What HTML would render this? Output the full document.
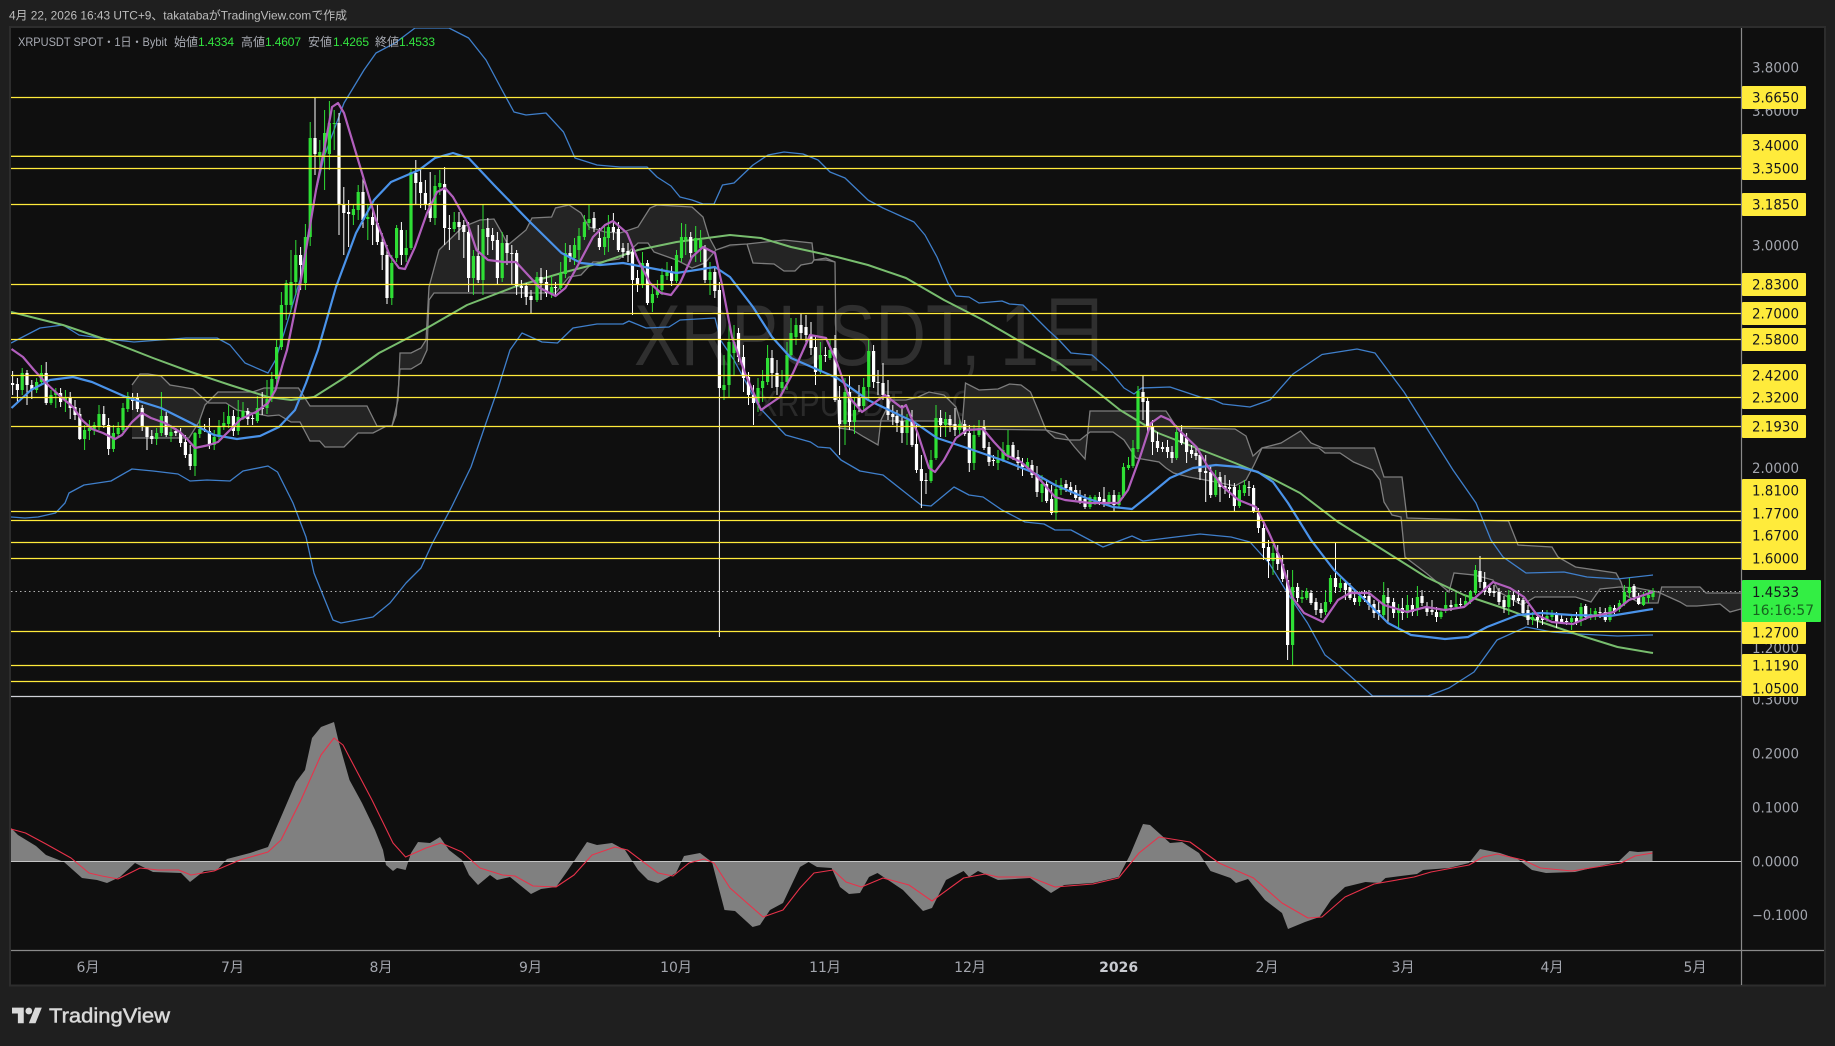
<!DOCTYPE html>
<html lang="ja"><head><meta charset="utf-8"><title>XRPUSDT</title>
<style>html,body{margin:0;padding:0;background:#1f1f1f;width:1835px;height:1046px;overflow:hidden}svg{display:block}
.ax{font-family:"DejaVu Sans","Noto Sans CJK JP",sans-serif;font-size:14px;fill:#a3a6ae}
.lb{font-family:"DejaVu Sans","Noto Sans CJK JP",sans-serif;font-size:14px;fill:#14161c}
.lg{font-family:"Liberation Sans","Noto Sans CJK JP",sans-serif;font-size:12px;fill:#a8abb3}
.lv{font-family:"Liberation Sans",sans-serif;font-size:12px;fill:#33e33f}
</style></head><body>
<svg width="1835" height="1046" viewBox="0 0 1835 1046" xmlns="http://www.w3.org/2000/svg">
<defs><clipPath id="up"><rect x="11" y="28" width="1730" height="668.5"/></clipPath>
<clipPath id="lo"><rect x="1742" y="697" width="80" height="250"/></clipPath></defs>
<rect width="1835" height="1046" fill="#1f1f1f"/>
<text x="9" y="19.5" textLength="338" lengthAdjust="spacingAndGlyphs" font-family="'Liberation Sans','Noto Sans CJK JP',sans-serif" font-size="12" fill="#bdbdbd">4月 22, 2026 16:43 UTC+9、takatabaがTradingView.comで作成</text>
<rect x="10" y="27" width="1815" height="958.5" fill="#0f0f0f" stroke="#2d2d2d" stroke-width="2"/>

<text x="634" y="365" textLength="475" lengthAdjust="spacingAndGlyphs" font-family="'Liberation Sans','Noto Sans CJK JP',sans-serif" font-size="86" fill="#2f2f2f">XRPUSDT, 1日</text>
<text x="757" y="416" textLength="237" lengthAdjust="spacingAndGlyphs" font-family="'Liberation Sans',sans-serif" font-size="36" fill="#2a2a2a">XRPUSDT SPOT</text>

<g clip-path="url(#up)">
<g fill="#242424" stroke="none">
<polygon points="132,385 140,374 148,374 161,376 170,385 182,387 193,389 203,398 208.6,403 226,403 237,410 268,416 279,415 291,422 300,422 310,441 319.6,441 325,447 344,447 358,433 373,433 386.5,426 392,426 377,426 367,406 310,406 298.5,388 264,388 252.6,392 218,392 205,405 199,422 189,438 132,438"/>
<polygon points="392,426 396,415 400,369 411,369 421,363 427,350 429,300 434,293 514,293 555.5,293 569,277 581,275 593,262 600,262 619,259 630.6,250 638,243 648,243 654,252 676.5,260 692,268 705,263 716,250 709,237 703,217 692,207 657,205 650,208 638,227 620,233 605,232 589,227 581,213 569,205 555.5,208 551.6,217 532,218 526,230 508,245 502,233 494,219 480,220 462.6,227 439,250 429,287 426,340 421,348 411,353 400,353 398,400"/>
<polygon points="716,250 730,245 747,244 784,240 812,243 814,260 826,258 835,262 826,260 814,260 812,263 801,265 795,271 784,271 774,264 753,263 747,244"/>
<polygon points="840,421 856,421 937,421 960,427 965.5,429 1046,430 1038,410 1030.5,392 1021,385 1009.5,384 998,389 979,390 965.5,383 962,427 956,407 944,395 929,392 918,397 906,400 891,400 881,420 878,445 864,437 852.6,430 839,428"/>
<polygon points="1046,430 1065,435 1074.5,447 1085,459 1090,411 1166,411 1177,428 1235,429 1246,436 1253,456 1262,448 1254,465 1246,480 1235,486 1216,482 1189,477 1173.6,473 1166,468 1159,462 1136,458 1124,440 1113,432 1090,432 1080,440 1069,440 1055,438"/>
<polygon points="1262,447 1281,443 1300.6,431 1311,443 1323,448 1374.5,448 1384,477 1402,477 1407,518 1508.5,521 1518,545 1552,547 1558,557 1575.5,567 1616,573 1621,582 1625,595 1640,603 1658,603 1658,592 1637,588 1620,587 1600,589 1591,602 1575.5,597 1535,597 1522,605 1499,592 1493,580 1474,575 1454,573 1449,592 1426,573 1405,557 1401,517 1392,515 1384,502 1380,480 1372.6,470 1353.5,462 1340,453 1325,453 1319,448 1262,448"/>
<polygon points="1658,603 1661.7,587 1700,587 1706,593 1741,593 1741,609 1730,612 1720,604 1697,606 1686.7,606 1680,602 1658,592"/>
</g>
<g fill="none" stroke="#7d7d7d" stroke-width="1.3">
<polyline points="132,385 140,374 148,374 161,376 170,385 182,387 193,389 203,398 208.6,403 226,403 237,410 268,416 279,415 291,422 300,422 310,441 319.6,441 325,447 344,447 358,433 373,433 386.5,426 392,426"/>
<polyline points="132,438 189,438 199,422 205,405 218,392 252.6,392 264,388 298.5,388 310,406 367,406 377,426 392,426"/>
<polyline points="392,426 396,415 400,369 411,369 421,363 427,350 429,300 434,293 514,293 555.5,293 569,277 581,275 593,262 600,262 619,259 630.6,250 638,243 648,243 654,252 676.5,260 692,268 705,263 716,250"/>
<polyline points="392,426 398,400 400,353 411,353 421,348 426,340 429,287 439,250 462.6,227 480,220 494,219 502,233 508,245 526,230 532,218 551.6,217 555.5,208 569,205 581,213 589,227 605,232 620,233 638,227 650,208 657,205 692,207 703,217 709,237 716,250"/>
<polyline points="716,250 730,245 747,244 784,240 812,243 814,260 826,258 835,262 836.5,387 839,428 852.6,430 864,437 878,445 881,420 891,400 906,400 918,397 929,392 944,395 956,407 962,427 965.5,383 979,390 998,389 1009.5,384 1021,385 1030.5,392 1038,410 1046,430 1065,435 1074.5,447 1085,459 1090,411 1166,411 1177,428 1235,429 1246,436 1253,456 1262,448 1281,443 1300.6,431 1311,443 1323,448 1374.5,448 1384,477 1402,477 1407,518 1508.5,521 1518,545 1552,547 1558,557 1575.5,567 1616,573 1621,582 1625,595 1640,603 1658,603 1661.7,587 1700,587 1706,593 1741,593"/>
<polyline points="747,244 753,263 774,264 784,271 795,271 801,265 812,263 814,260 826,260 835,262"/>
<polyline points="840,421 856,421 937,421 960,427 965.5,429 1046,430 1055,438 1069,440 1080,440 1090,432 1113,432 1124,440 1136,458 1159,462 1166,468 1173.6,473 1189,477 1216,482 1235,486 1246,480 1254,465 1262,448 1319,448 1325,453 1340,453 1353.5,462 1372.6,470 1380,480 1384,502 1392,515 1401,517 1405,557 1426,573 1449,592 1454,573 1474,575 1493,580 1499,592 1522,605 1535,597 1575.5,597 1591,602 1600,589 1620,587 1637,588 1658,592 1680,602 1686.7,606 1697,606 1720,604 1730,612 1741,609"/>
</g>

<polyline fill="none" stroke="#3f7fcb" stroke-width="1.3" stroke-linejoin="round" points="11,343 40,328 63,325 79,335 107,339 134,342 186,338 217,338 230,345 245,363 268,373 275.5,360 285,330 300,280 314,200 324,157 344,103 364,70 376,53 395,43 415,28 449,28 468.6,38 486,60 502,90 514,112 526,115 546,113 563.5,132 575,158 597,165 620,167 647,167 657,177 671,186 680,197 692,200 703,204 714,204 722.5,185 734,183 753,165 768,155 784,152 803,154 818,160 830,172 845,178 868,200 883,208 898.5,215 914,222 925,235 937,257 948,283 956,296 969,297 979,303 1002,301 1009.5,304 1023,305 1048,330 1059,340 1071,353 1092,355 1109,370 1124,388 1134,394 1141.5,388 1170,387 1200,397 1214,400 1223,404 1250,407 1270,400 1293,374 1322,354.5 1357,349 1375,353 1404,392 1426,427 1453,470 1476,503 1491,540 1503,557 1526,573 1564,572 1587,577 1617.5,579 1653,575"/>
<polyline fill="none" stroke="#3f7fcb" stroke-width="1.3" stroke-linejoin="round" points="11,517 25,518 38,517 55.5,513 65,503 69,493 84,485 111,481 132,469 153,471 178,474 190,481 207,480 230,481 243,471 268,466 277.5,472 293,503 306,537 314,573 333,620 341,623 373,617 390,603 406,583 421,568 432.5,543 451.6,507 471,467 486,423 497.5,390 510,350 522,333 542,342 557.5,343 573,328 597,324 623,324 629,321 646,328 669,327 680,320 715,318 720.5,340 734,360 759,407 764.6,413 785.6,435 810.5,442 818,447 830,448 841,460 860,471 883,475 902,490 921,505 931,506 954,487 969,495 983,497 1002,510 1025,522 1044,524 1055,530 1071,530 1103,547 1132,536 1143,541 1200,534 1231,537 1250,542 1269,563 1290,597 1307.5,623 1325,655 1338,665 1372.6,696 1428,696 1449,688 1474,672 1497,640 1526,627 1552,632 1579,634 1617.5,636 1653,635"/>

<polyline fill="none" stroke="#78bd6e" stroke-width="2" stroke-linejoin="round" points="11,312 63,325 107,340 153,358 191,372 230,385 268,397 291,400 314,397 344,378 379,353 427,328 467,305 514,287 561.5,273 600,263 638,250 676.5,242 730,235 761,238 791,247 837,257 868,265 906,278 944,300 983,320 1021,342 1059,363 1097.5,392 1120,410 1158,433 1196.5,448 1235,463 1269,477 1300,493 1338,522 1380,548 1426,577 1464,595 1503,608 1541,622 1579,635 1617.5,647 1653,653"/>

<!-- wicks -->
<path fill="none" stroke="#fff" stroke-width="1" d="M12.6 371V395M17.4 378V402M27 370V405M31.8 380V399M46.2 362V405M60.6 388V407M70.2 392V419M75 400V420M79.8 408V440M103.8 406V428M108.6 418V455M132.6 393V410M137.4 393V412M142.2 405V431M147 428V450M151.8 430V444M166.2 412V437M175.8 428V436M180.6 428V447M185.4 435V458M190.2 445V470M204.6 424V432M209.4 418V449M233.4 410V436M247.8 408V425M252.6 415V425M262.2 392V415M300.6 247V290M315 98V175M339 113V235M343.8 187V255M348.6 200V247M363 175V228M372.6 210V245M377.4 205V245M382.2 233V270M387 245V304M401.4 222V265M415.8 160V205M420.6 168V208M425.4 180V210M430.2 172V222M444.6 167V245M449.4 215V250M459 212V240M463.8 220V258M468.6 222V292M478.2 225V283M487.8 218V255M492.6 228V250M497.4 232V285M507 235V265M511.8 245V285M516.6 250V295M521.4 280V298M526.2 283V305M531 290V313M541 268V300M546.5 270V297M555.5 282V295M570 245V262M594 212V232M599.4 228V250M613.4 213V240M618.4 222V252M623 243V258M628 243V262M632.5 248V315M637.5 270V292M647.5 260V305M671.6 266V286M690.7 232V258M705 245V283M714.8 266V298M719.4 282V637M738.5 328V362M743.5 345V392M748.5 372V405M753.5 385V425M772 350V388M777 360V395M801 313V340M806 315V344M811 322V355M815.5 335V385M825.4 347V362M835 335V402M839.6 386V455M849.5 376V430M859 385V412M873.6 345V388M878 370V395M883 363V400M888 380V420M892.8 405V425M897 410V432M902 405V443M912 410V447M916.5 425V473M921.4 455V508M926 473V494M940.6 410V437M950 415V432M955 408V436M964.7 420V436M969.3 425V472M984 420V450M989 442V466M993.4 455V466M1013 442V460M1018 450V470M1022.5 458V476M1032 460V478M1037 466V497M1046.6 480V503M1051.6 485V515M1066 480V492M1070.7 482V495M1075.7 485V500M1080 490V504M1085 494V509M1099.4 492V505M1104 487V507M1114 490V512M1143 376V420M1147.6 398V435M1152.5 420V455M1157.5 432V452M1162.5 442V452M1167.5 440V458M1172 446V463M1181.6 425V445M1186.6 433V463M1191.6 445V458M1196 448V460M1200 452V480M1205.7 455V502M1210.7 465V498M1220 472V502M1225 475V494M1229.5 480V498M1234.4 483V511M1249 481V496M1253.6 485V513M1258.5 508V533M1263.5 523V560M1268.5 540V578M1277.7 545V570M1282.6 555V582M1287.6 570V660M1297.6 583V602M1311 590V605M1316 598V615M1321 603V618M1335.5 543V593M1345.4 580V600M1350 583V600M1354.6 590V605M1364.5 590V602M1369 590V610M1374 600V618M1378.7 600V620M1388 588V622M1393.6 598V618M1402.4 598V620M1412.4 598V616M1422 590V606M1427 602V616M1432 600V615M1436.5 607V622M1451 600V611M1460.6 598V608M1480 556V588M1484.7 572V595M1489.7 584V596M1494 585V597M1499 588V605M1504 596V613M1513.4 590V606M1518.4 590V604M1523 598V615M1528 605V625M1537.5 613V628M1542.5 610V625M1556.6 612V628M1561.6 615V624M1566.6 618V625M1576.5 612V625M1585.7 604V620M1600 607V618M1605.3 608V622M1614.5 605V614M1634 584V600M1638.6 593V605"/>
<path fill="none" stroke="#2fdf35" stroke-width="1" d="M22.2 368V395M36.6 378V393M41.4 365V385M51 390V405M55.8 388V408M65.4 390V412M84.6 425V450M89.4 420V440M94.2 422V435M99 405V430M113.4 425V452M118.2 422V438M123 403V432M127.8 392V412M156.6 428V445M161.4 392V436M171 425V442M195 432V476M199.8 420V438M214.2 430V450M219 420V440M223.8 412V430M228.6 405V428M238.2 400V435M243 402V420M257.4 396V423M267 380V414M271.8 372V402M276.6 340V385M281.4 292V350M286.2 280V320M291 250V312M295.8 240V295M305.4 224V290M310.2 122V246M319.8 140V175M324.6 110V190M329.4 101V170M334.2 110V150M353.4 205V225M358.2 185V220M367.8 205V240M391.8 255V305M396.6 225V262M406.2 230V262M411 168V250M435 175V225M439.8 170V195M454.2 212V232M473.4 250V295M483 205V295M502.2 232V282M537 272V302M551.6 276V298M560.7 262V290M565.4 243V278M574.5 238V265M579 228V262M584.4 215V240M589 205V230M604.6 225V255M608.4 215V252M642.5 252V288M652.4 285V312M657.4 280V298M662 268V295M667 262V280M676.5 250V283M681.5 223V262M685.7 224V255M695.7 226V262M700.6 230V262M710 262V295M724 355V400M729 325V398M734 325V375M758 378V412M762.6 370V402M767.6 345V385M782 370V395M787 342V390M791 318V358M796 318V345M820.4 342V374M830 340V360M845 378V445M854.5 398V434M863.7 378V410M868.7 340V400M907 414V445M931 450V483M936 405V460M945.6 412V437M959.7 420V435M974 425V470M979 420V437M998 450V470M1003 442V462M1008 430V460M1027.5 458V470M1042 475V502M1056 480V520M1061 478V495M1090 495V509M1095 495V505M1109 492V505M1119 492V507M1123.5 463V498M1128.5 457V470M1133 440V468M1138 386V452M1176.6 425V460M1215.7 470V497M1239.4 485V508M1244.4 480V496M1273 545V575M1292.6 570V665M1302 590V603M1306.7 588V600M1325.5 590V615M1330.5 575V604M1340.4 578V592M1359.6 591V606M1383.7 582V620M1398.6 604V630M1407.4 595V618M1417.4 586V616M1441 610V619M1445.7 592V613M1456 592V609M1465.6 595V607M1470.5 590V604M1475.5 565V595M1508.8 590V615M1532.6 612V625M1547 610V622M1552 610V620M1571.6 615V630M1581 603V626M1590.7 608V620M1595.3 608V620M1610 605V622M1619.4 600V612M1624.4 585V606M1629.4 578V598M1643.5 592V606M1648.5 590V603M1653 588V600"/>
<!-- bodies -->
<path fill="none" stroke="#fff" stroke-width="3.2" d="M12.6 383V385M17.4 384V390M27 373V385M31.8 385V390M46.2 373V403M60.6 393V402M70.2 398V408M75 407V415M79.8 414V439M103.8 414V425M108.6 425V449M132.6 397V401M137.4 397V409M142.2 408V427M147 427V437M151.8 436V439M166.2 416V435M175.8 431V433M180.6 433V443M185.4 442V455M190.2 454V466M204.6 429V430M209.4 431V445M233.4 416V431M247.8 411V419M252.6 418V419M262.2 408V409M300.6 255V265M315 138V154M339 123V205M343.8 205V213M348.6 212V214M363 192V220M372.6 217V225M377.4 223V242M382.2 242V255M387 255V298M401.4 230V255M415.8 173V183M420.6 182V193M425.4 193V204M430.2 203V218M444.6 184V228M449.4 228V229M459 222V227M463.8 225V232M468.6 232V278M478.2 256V280M487.8 228V237M492.6 235V241M497.4 240V278M507 243V253M511.8 253V254M516.6 253V286M521.4 286V288M526.2 286V297M531 296V300M541 277V283M546.5 282V293M555.5 287V288M570 253V258M594 218V228M599.4 238V247M613.4 227V232M618.4 229V250M623 248V252M628 251V255M632.5 252V280M637.5 278V285M647.5 263V303M671.6 272V281M690.7 237V253M705 248V280M714.8 272V291M719.4 290V388M738.5 333V357M743.5 357V378M748.5 377V395M753.5 395V403M772 358V373M777 373V387M801 325V333M806 327V335M811 335V348M815.5 347V372M825.4 355V356M835 348V400M839.6 400V424M849.5 392V422M859 397V406M873.6 351V382M878 382V383M883 383V395M888 395V415M892.8 414V417M897 416V423M902 421V433M912 420V445M916.5 444V470M921.4 469V481M926 480V481M940.6 418V425M950 419V425M955 424V430M964.7 424V434M969.3 433V463M984 426V448M989 447V462M993.4 460V461M1013 445V458M1018 457V463M1022.5 463V467M1032 465V475M1037 474V492M1046.6 484V501M1051.6 499V513M1066 484V488M1070.7 487V492M1075.7 490V498M1080 497V501M1085 499V507M1099.4 497V501M1104 499V503M1114 495V505M1143 392V402M1147.6 401V427M1152.5 426V442M1157.5 441V448M1162.5 447V449M1167.5 447V452M1172 452V458M1181.6 433V443M1186.6 438V452M1191.6 450V454M1196 453V456M1200 455V472M1205.7 471V473M1210.7 472V495M1220 477V487M1225 486V489M1229.5 487V489M1234.4 487V506M1249 487V488M1253.6 488V512M1258.5 513V528M1263.5 528V548M1268.5 547V561M1277.7 553V564M1282.6 564V579M1287.6 580V645M1297.6 587V598M1311 593V603M1316 602V610M1321 609V613M1335.5 578V587M1345.4 583V590M1350 587V598M1354.6 598V602M1364.5 596V598M1369 596V605M1374 604V613M1378.7 610V613M1388 597V603M1393.6 602V613M1402.4 608V613M1412.4 605V612M1422 596V603M1427 608V612M1432 610V612M1436.5 612V617M1451 605V607M1460.6 604V605M1480 571V582M1484.7 582V592M1489.7 588V593M1494 591V593M1499 592V602M1504 600V607M1513.4 595V600M1518.4 598V601M1523 600V613M1528 610V620M1537.5 617V620M1542.5 618V620M1556.6 613V622M1561.6 619V622M1566.6 621V622M1576.5 618V622M1585.7 606V617M1600 612V613M1605.3 612V620M1614.5 608V612M1634 586V597M1638.6 597V604"/>
<path fill="none" stroke="#2fdf35" stroke-width="3.2" d="M22.2 373V390M36.6 382V390M41.4 373V382M51 395V403M55.8 392V395M65.4 398V400M84.6 430V439M89.4 428V431M94.2 425V429M99 414V427M113.4 433V449M118.2 428V434M123 408V430M127.8 396V409M156.6 433V439M161.4 416V433M171 432V436M195 433V466M199.8 429V434M214.2 437V445M219 427V437M223.8 423V427M228.6 416V424M238.2 417V431M243 411V418M257.4 408V421M267 399V408M271.8 379V399M276.6 347V379M281.4 305V347M286.2 283V305M291 282V305M295.8 255V282M305.4 237V283M310.2 138V237M319.8 152V157M324.6 133V153M329.4 123V154M334.2 123V124M353.4 209V215M358.2 192V210M367.8 217V219M391.8 263V298M396.6 228V258M406.2 248V255M411 172V248M435 186V218M439.8 183V187M454.2 222V229M473.4 256V278M483 229V280M502.2 243V278M537 277V300M551.6 287V293M560.7 273V288M565.4 253V274M574.5 245V258M579 236V250M584.4 222V237M589 219V223M604.6 237V247M608.4 227V238M642.5 263V285M652.4 294V303M657.4 290V295M662 275V290M667 272V276M676.5 255V281M681.5 237V258M685.7 237V240M695.7 238V252M700.6 240V248M710 272V280M724 385V390M729 342V385M734 342V353M758 388V403M762.6 381V388M767.6 358V382M782 382V388M787 355V382M791 333V355M796 325V337M820.4 355V372M830 350V358M845 392V424M854.5 410V422M863.7 387V406M868.7 351V387M907 420V433M931 460V481M936 418V458M945.6 419V425M959.7 424V430M974 435V463M979 428V435M998 459V463M1003 450V460M1008 445V455M1027.5 462V467M1042 484V493M1056 489V513M1061 485V490M1090 497V507M1095 497V503M1109 495V503M1119 495V505M1123.5 467V496M1128.5 465V468M1133 448V466M1138 391V449M1176.6 432V458M1215.7 477V495M1239.4 490V506M1244.4 485V493M1273 553V561M1292.6 587V645M1302 597V599M1306.7 591V598M1325.5 602V612M1330.5 578V602M1340.4 583V588M1359.6 596V602M1383.7 595V615M1398.6 609V613M1407.4 605V613M1417.4 597V608M1441 612V617M1445.7 605V611M1456 604V607M1465.6 601V605M1470.5 591V602M1475.5 570V593M1508.8 595V607M1532.6 617V620M1547 616V619M1552 613V617M1571.6 618V622M1581 607V621M1590.7 614V616M1595.3 611V616M1610 607V620M1619.4 603V609M1624.4 592V604M1629.4 587V593M1643.5 597V605M1648.5 595V598M1653 592V597"/>

<polyline fill="none" stroke="#4a93ea" stroke-width="2.2" stroke-linejoin="round" points="11.5,408 31,390 50,380 73,377 92,382 126,397 161,408 191,423 214,435 237,439 260,436 279,427 295,410 306,383 318,350 336,287 356,233 374,200 391,182 419,170 435,158 453,153 468.6,158 494,185 530,222 561.5,253 581,263 600,265 623,263 650,268 676.5,273 696,270 715,267 730,277 753,307 772,337 791,358 814,368 837,378 868,400 914,422 937,438 967,448 1002,460 1032,472 1055,485 1086,498 1113,507 1132,509 1147,497 1170,478 1193,468 1216,465 1239,467 1258,472 1273,482 1288,503 1311,540 1334,570 1365,600 1388,623 1411,635 1445,639 1468,637 1487,627 1518,615 1541,613 1572,615 1610,616 1653,609"/>
<polyline fill="none" stroke="#b25fbd" stroke-width="2.2" stroke-linejoin="round" points="11.5,349 23,357 34,370 46,383 61,397 73,407 82,420 92,429 103,433 115,439 122,435 132,422 142,413 151,418 165,423 180,432 188,440 195,448 209,445 218,442 230,430 241,419 256,412 268,403 275.5,390 283,363 287,350 300.5,283 316,190 326,140 332,107 338,103 344,113 356,153 368,193 376,220 389.5,255 399,268 405,269 415,247 427,213 437,192 445,188 453,197 467,222 476.5,250 488,260 504,262 516,262 528,275 540,288 555.5,296 565.4,288 577,267 593,237 605,225 613,221 627,233 638,260 650,283 661,293 671,295 680,283 692,257 703,247 715,253 722.5,287 732,337 745,373 761,410 780,397 793,373 810,335 826,338 837,363 849,397 862,412 885,395 902,408 906,405 917.6,433 929,468 935,472 944,460 956,438 967,430 983,429 994,442 1006,455 1021,462 1036,475 1055,497 1065,500 1090,503 1118.5,503 1128,490 1140,457 1151,423 1161,416 1170,420 1181,432 1196.5,447 1208,467 1223,487 1238.6,500 1256,507 1269,533 1281,560 1292,597 1304,613 1323,622 1338,600 1350,593 1369,593 1384,605 1407,612 1426,607 1445,610 1464,607 1476,597 1493,582 1510,588 1524,597 1537,615 1552,622 1573,624 1589,617 1614,612 1629,600 1653,592"/>
</g>

<line x1="11" y1="591.5" x2="1741" y2="591.5" stroke="#b0b0b0" stroke-width="1" stroke-dasharray="1.5 3"/>

<g stroke="#ffeb3b" stroke-width="1.3">
<path d="M11 97.5H1741M11 156.3H1741M11 168.5H1741M11 204.5H1741M11 284.5H1741M11 313.5H1741M11 339.5H1741M11 375.5H1741M11 397.5H1741M11 426.5H1741M11 511.5H1741M11 520.5H1741M11 542.5H1741M11 558.5H1741M11 631.5H1741M11 665.5H1741M11 681.5H1741"/>
</g>

<line x1="11" y1="696.5" x2="1741" y2="696.5" stroke="#cfd1d8" stroke-width="1.3"/>
<line x1="1741.5" y1="28" x2="1741.5" y2="985" stroke="#8a8a8a" stroke-width="1.2"/>
<line x1="11" y1="950.5" x2="1824" y2="950.5" stroke="#8a8a8a" stroke-width="1.2"/>

<!-- oscillator -->
<polygon fill="#808080" points="11,861.5 11,828 18,835 36,846 46,855 64,862 82,878 97,880 107,883 120,877 135,863 153,872 181,873 190,882 204,871 217,870 227,859 250,853 268,847 281,817 296,782 305,770 312,738 321,727 334,722 339,743 349.5,780 362,803 375,830 383,850 386,865 393,871 397,868 405.6,870 411,853 418,842 430,843 440,837 449,850 462,860 469,875 478,885 490,875 497,880 510,877 531,894 541,889 556,887 566,873 587,842 597,845 612,843 625,850 638,870 648,880 658,883 676,873 684,856 700,853 712,862 724.5,910 735,911 752.6,927 760,925 770,910 783,903 800,867 808.6,862 817,867 831.6,868 840,887 849,894 860,893 869,877 877.5,873 903,890 923,911 932,908 946,880 963.6,871 969,877 978,871 998,880 1030,878 1051,893 1064,885 1093,883 1118.6,877 1130,855 1143,824 1150,825 1170,843 1182,842 1199,853 1210.5,871 1230.5,878 1236,883 1248,879 1265,900 1282,913 1288,929 1305,922 1319.5,917 1331,900 1345,887 1365.5,882 1380,883 1385.5,878 1417,874 1423,870 1449,868 1469,863 1480,849 1500,853 1517.6,859 1532,870 1546,873 1575,872 1604,865 1618,862 1629.5,851 1638,852 1652.5,851 1652.5,861.5"/>
<line x1="11" y1="861.5" x2="1741" y2="861.5" stroke="#c4c4c4" stroke-width="1.1"/>
<polyline fill="none" stroke="#e8324a" stroke-width="1.1" stroke-linejoin="round" points="11,829 25.5,833 46,844 71,858 89,873 102,876 118,879 140,868 158,870 178.6,870 191,875 214,871 240,860 268,852 281,840 301,800 321,755 334,738 343,745 372,800 393,843 405.6,857 426,848 441,843 462,852 480,868 502.5,875 515,876 533,886 556,887 574,875 592,855 615,847 627.5,850 658,873 673,876 689,863 704,859 714,863 730,888 763,917 783,910 800,888 814,873 833,870 846,882 861.4,887 883,878 909,885 932,901 963.6,878 985,874 998,877 1030,877 1055,887 1093,884 1118.6,878 1139,853 1159,837 1190,842 1219,863 1253.5,878 1282,903 1308,918 1322,917 1345,897 1374,884 1414,877 1431,872 1469,865 1483,857 1497.5,854 1523,860 1540.5,868 1572,871 1621,863 1635,856 1652.5,853"/>

<!-- legend -->
<text class="lg" x="18" y="46" textLength="149" lengthAdjust="spacingAndGlyphs">XRPUSDT SPOT・1日・Bybit</text>
<text class="lg" x="174" y="46" textLength="24">始値</text><text class="lv" x="198" y="46" textLength="36">1.4334</text>
<text class="lg" x="241" y="46" textLength="24">高値</text><text class="lv" x="265" y="46" textLength="36">1.4607</text>
<text class="lg" x="308" y="46" textLength="24">安値</text><text class="lv" x="333" y="46" textLength="36">1.4265</text>
<text class="lg" x="375" y="46" textLength="24">終値</text><text class="lv" x="399" y="46" textLength="36">1.4533</text>

<!-- axis labels -->
<g class="ax">
<text x="1752" y="72.5" textLength="47" lengthAdjust="spacingAndGlyphs">3.8000</text>
<text x="1752" y="116" textLength="47" lengthAdjust="spacingAndGlyphs">3.6000</text>
<text x="1752" y="250.5" textLength="47" lengthAdjust="spacingAndGlyphs">3.0000</text>
<text x="1752" y="473" textLength="47" lengthAdjust="spacingAndGlyphs">2.0000</text>
<text x="1752" y="653" textLength="47" lengthAdjust="spacingAndGlyphs">1.2000</text>
<g clip-path="url(#lo)"><text x="1752" y="704.5" textLength="47" lengthAdjust="spacingAndGlyphs">0.3000</text></g>
<text x="1752" y="758.5" textLength="47" lengthAdjust="spacingAndGlyphs">0.2000</text>
<text x="1752" y="812.5" textLength="47" lengthAdjust="spacingAndGlyphs">0.1000</text>
<text x="1752" y="866.5" textLength="47" lengthAdjust="spacingAndGlyphs">0.0000</text>
<text x="1752" y="920" textLength="56" lengthAdjust="spacingAndGlyphs">−0.1000</text>
</g>

<!-- yellow labels -->
<g fill="#ffeb3b">
<rect x="1742" y="86" width="64" height="23" rx="1"/>
<rect x="1742" y="134" width="64" height="46" rx="1"/>
<rect x="1742" y="193" width="64" height="23" rx="1"/>
<rect x="1742" y="273" width="64" height="23" rx="1"/>
<rect x="1742" y="302" width="64" height="23" rx="1"/>
<rect x="1742" y="328" width="64" height="23" rx="1"/>
<rect x="1742" y="364" width="64" height="45" rx="1"/>
<rect x="1742" y="415" width="64" height="23" rx="1"/>
<rect x="1742" y="479" width="64" height="91" rx="1"/>
<rect x="1742" y="621" width="64" height="23" rx="1"/>
<rect x="1742" y="654" width="64" height="42" rx="1"/>
</g>
<g class="lb">
<text x="1752" y="102.5" textLength="47" lengthAdjust="spacingAndGlyphs">3.6650</text>
<text x="1752" y="150.7" textLength="47" lengthAdjust="spacingAndGlyphs">3.4000</text>
<text x="1752" y="173.7" textLength="47" lengthAdjust="spacingAndGlyphs">3.3500</text>
<text x="1752" y="209.5" textLength="47" lengthAdjust="spacingAndGlyphs">3.1850</text>
<text x="1752" y="289.5" textLength="47" lengthAdjust="spacingAndGlyphs">2.8300</text>
<text x="1752" y="318.5" textLength="47" lengthAdjust="spacingAndGlyphs">2.7000</text>
<text x="1752" y="344.5" textLength="47" lengthAdjust="spacingAndGlyphs">2.5800</text>
<text x="1752" y="380.5" textLength="47" lengthAdjust="spacingAndGlyphs">2.4200</text>
<text x="1752" y="402.5" textLength="47" lengthAdjust="spacingAndGlyphs">2.3200</text>
<text x="1752" y="431.5" textLength="47" lengthAdjust="spacingAndGlyphs">2.1930</text>
<text x="1752" y="495.7" textLength="47" lengthAdjust="spacingAndGlyphs">1.8100</text>
<text x="1752" y="518.3" textLength="47" lengthAdjust="spacingAndGlyphs">1.7700</text>
<text x="1752" y="540.7" textLength="47" lengthAdjust="spacingAndGlyphs">1.6700</text>
<text x="1752" y="563.3" textLength="47" lengthAdjust="spacingAndGlyphs">1.6000</text>
<text x="1752" y="637.7" textLength="47" lengthAdjust="spacingAndGlyphs">1.2700</text>
<text x="1752" y="670.3" textLength="47" lengthAdjust="spacingAndGlyphs">1.1190</text>
<text x="1752" y="693.3" textLength="47" lengthAdjust="spacingAndGlyphs">1.0500</text>
</g>
<rect x="1742" y="580" width="79" height="42" rx="1" fill="#33ee44"/>
<text class="lb" x="1752" y="597" textLength="47" lengthAdjust="spacingAndGlyphs">1.4533</text>
<text class="lb" x="1752" y="615" textLength="62" lengthAdjust="spacingAndGlyphs" style="fill:#17631f">16:16:57</text>

<!-- time axis -->
<g class="ax" text-anchor="middle">
<text x="88" y="972">6月</text><text x="232.5" y="972">7月</text><text x="381" y="972">8月</text><text x="530.5" y="972">9月</text><text x="676" y="972">10月</text><text x="825" y="972">11月</text><text x="970" y="972">12月</text><text x="1118.6" y="972" font-weight="bold" fill="#c8cad0">2026</text><text x="1267" y="972">2月</text><text x="1403" y="972">3月</text><text x="1552" y="972">4月</text><text x="1695" y="972">5月</text>
</g>

<!-- logo -->
<g transform="translate(12 1004.3) scale(.84)" fill="#d9d9d9"><path d="M14 22.5H7V11H0V4h14v18.5zM28 22.5h-8l7.5-18.5h8L28 22.5z"/><circle cx="20" cy="8" r="4"/></g>
<text x="49" y="1022.7" textLength="121" lengthAdjust="spacingAndGlyphs" font-family="'Liberation Sans',sans-serif" font-size="20" fill="#d9d9d9" stroke="#d9d9d9" stroke-width=".5">TradingView</text>
</svg>
</body></html>
